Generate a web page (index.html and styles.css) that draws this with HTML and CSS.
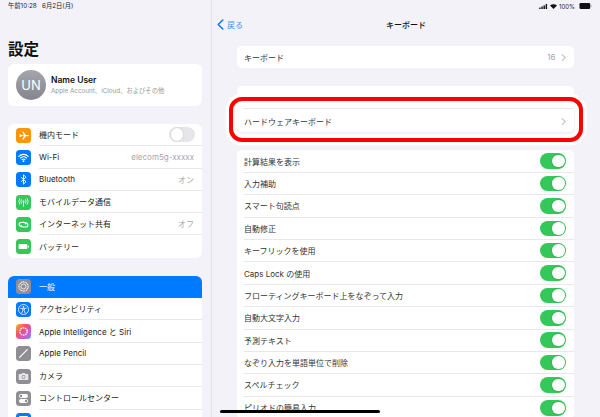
FILE: index.html
```html
<!DOCTYPE html>
<html lang="ja">
<head>
  <meta charset="UTF-8">
  <meta name="viewport" content="width=device-width, initial-scale=1.0">
  <title>設定 - キーボード</title>
  <link rel="stylesheet" href="styles.css">
</head>
<body>
  <div class="ipad">
    <aside class="sidebar">
      <div class="status-time">午前10:28&nbsp;&nbsp;&nbsp;6月2日(月)</div>
      <h1>設定</h1>
      <div class="profile">
        <div class="avatar">UN</div>
        <div>
          <div class="profile-name">Name User</div>
          <div class="profile-sub">Apple Account、iCloud、およびその他</div>
        </div>
      </div>

      <div class="side-group">
        <div class="side-row">
          <svg class="ico" viewBox="0 0 15 15"><rect width="15" height="15" rx="3.5" fill="#ff9500"/><path d="M3.2 6.6l.9-.3 2 1 1.7-.1-1.6-3.7h1l2.7 3.6 2-.1c.7 0 1 .3 1 .6s-.3.6-1 .6l-2 0-2.7 3.6h-1l1.6-3.7-1.7-.1-2 1-.9-.3.7-1.100z" fill="#fff"/></svg>
          <div class="side-text"><span>機内モード</span><i class="toggle off"></i></div>
        </div>
        <div class="side-row">
          <svg class="ico" viewBox="0 0 15 15"><rect width="15" height="15" rx="3.5" fill="#007aff"/><path d="M2.8 6.3a6.6 6.6 0 0 1 9.4 0M4.5 8a4.2 4.2 0 0 1 6 0M6.1 9.6a1.9 1.9 0 0 1 2.8 0" fill="none" stroke="#fff" stroke-width="1.1" stroke-linecap="round"/><circle cx="7.5" cy="11.2" r=".9" fill="#fff"/></svg>
          <div class="side-text"><span>Wi-Fi</span><span class="val">elecom5g-xxxxx</span></div>
        </div>
        <div class="side-row">
          <svg class="ico" viewBox="0 0 15 15"><rect width="15" height="15" rx="3.5" fill="#007aff"/><path d="M5 5.2l5 4.6-2.5 2.4V2.8L10 5.2 5 9.8" fill="none" stroke="#fff" stroke-width=".9"/></svg>
          <div class="side-text"><span>Bluetooth</span><span class="val">オン</span></div>
        </div>
        <div class="side-row">
          <svg class="ico" viewBox="0 0 15 15"><rect width="15" height="15" rx="3.5" fill="#34c759"/><path d="M7.5 7v4.600" stroke="#fff" stroke-width="1"/><circle cx="7.5" cy="6.4" r="1" fill="#fff"/><path d="M5.400 4.600a3 3 0 0 0 0 3.600M9.600 4.600a3 3 0 0 1 0 3.600M3.700 3.600a5 5 0 0 0 0 5.600M11.300 3.600a5 5 0 0 1 0 5.600" fill="none" stroke="#fff" stroke-width=".8" stroke-linecap="round"/></svg>
          <div class="side-text"><span>モバイルデータ通信</span></div>
        </div>
        <div class="side-row">
          <svg class="ico" viewBox="0 0 15 15"><rect width="15" height="15" rx="3.5" fill="#34c759"/><path d="M6.400 9.600H5.200a2.100 2.100 0 0 1 0-4.200h2.600a2.100 2.100 0 0 1 2 1.600M8.600 5.800h1.200a2.100 2.100 0 0 1 0 4.200H7.200a2.100 2.100 0 0 1-2-1.600" fill="none" stroke="#fff" stroke-width="1.1" stroke-linecap="round"/></svg>
          <div class="side-text"><span>インターネット共有</span><span class="val">オフ</span></div>
        </div>
        <div class="side-row last">
          <svg class="ico" viewBox="0 0 15 15"><rect width="15" height="15" rx="3.5" fill="#34c759"/><rect x="2.600" y="4.900" width="8.800" height="5.200" rx="1.200" fill="#fff"/><rect x="11.900" y="6.400" width="1" height="2.200" rx=".5" fill="#fff"/></svg>
          <div class="side-text"><span>バッテリー</span></div>
        </div>
      </div>

      <div class="side-group">
        <div class="side-row active">
          <svg class="ico" viewBox="0 0 15 15"><rect width="15" height="15" rx="3.5" fill="#8e8e93"/><circle cx="7.5" cy="7.5" r="4.600" fill="none" stroke="#fff" stroke-width="1.100" stroke-dasharray="1.200 .5"/><circle cx="7.5" cy="7.5" r="2.500" fill="none" stroke="#fff" stroke-width=".8"/></svg>
          <div class="side-text"><span>一般</span></div>
        </div>
        <div class="side-row">
          <svg class="ico" viewBox="0 0 15 15"><rect width="15" height="15" rx="3.5" fill="#007aff"/><circle cx="7.5" cy="7.5" r="5" fill="none" stroke="#fff" stroke-width=".8"/><circle cx="7.5" cy="4.800" r=".9" fill="#fff"/><path d="M4.800 6.200l2 .5v1.800l-1 2.600M10.200 6.200l-2 .5v1.800l1 2.600M6.800 6.700h1.400" fill="none" stroke="#fff" stroke-width=".8" stroke-linecap="round"/></svg>
          <div class="side-text"><span>アクセシビリティ</span></div>
        </div>
        <div class="side-row">
          <svg class="ico" viewBox="0 0 15 15"><defs><linearGradient id="ai" x1="0" y1="0" x2="1" y2="1"><stop offset="0" stop-color="#ffb02e"/><stop offset=".4" stop-color="#f2506e"/><stop offset=".75" stop-color="#c65be8"/><stop offset="1" stop-color="#4aa8ff"/></linearGradient></defs><rect width="15" height="15" rx="3.5" fill="url(#ai)"/><circle cx="7.5" cy="7.5" r="3.700" fill="none" stroke="#fff" stroke-width="1.300" stroke-dasharray="1.600 .7"/></svg>
          <div class="side-text"><span>Apple Intelligence と Siri</span></div>
        </div>
        <div class="side-row">
          <svg class="ico" viewBox="0 0 15 15"><rect width="15" height="15" rx="3.5" fill="#8e8e93"/><path d="M3.600 11.400l7.600-7.800" stroke="#fff" stroke-width="1.200" stroke-linecap="round"/></svg>
          <div class="side-text"><span>Apple Pencil</span></div>
        </div>
        <div class="side-row">
          <svg class="ico" viewBox="0 0 15 15"><rect width="15" height="15" rx="3.5" fill="#8e8e93"/><path d="M3.400 5h2l.8-1.100h2.600L9.600 5h2a.7.7 0 0 1 .7.7v4.600a.7.7 0 0 1-.7.7H3.400a.7.7 0 0 1-.7-.7V5.700a.7.7 0 0 1 .7-.7z" fill="#e6e6e8"/><circle cx="7.5" cy="8" r="1.900" fill="#8e8e93"/><circle cx="7.5" cy="8" r="1.200" fill="#e6e6e8"/></svg>
          <div class="side-text"><span>カメラ</span></div>
        </div>
        <div class="side-row">
          <svg class="ico" viewBox="0 0 15 15"><rect width="15" height="15" rx="3.5" fill="#8e8e93"/><rect x="3" y="3" width="9" height="4" rx="2" fill="#fff"/><circle cx="5" cy="5" r="1.200" fill="#8e8e93"/><rect x="3" y="8" width="9" height="4" rx="2" fill="#fff"/><circle cx="10" cy="10" r="1.200" fill="#8e8e93"/></svg>
          <div class="side-text"><span>コントロールセンター</span></div>
        </div>
        <div class="side-row last">
          <svg class="ico" viewBox="0 0 15 15"><rect width="15" height="15" rx="3.5" fill="#007aff"/><rect x="3" y="3" width="9" height="9" rx="1" fill="#fff"/></svg>
          <div class="side-text"></div>
        </div>
      </div>
    </aside>

    <main class="detail">
      <div class="status-icons">
        <svg class="signal" viewBox="0 0 12 7"><rect x="0" y="5" width="2" height="2" fill="#111"/><rect x="3" y="3.500" width="2" height="3.500" fill="#111"/><rect x="6" y="2" width="2" height="5" fill="#111"/><rect x="9" y="0" width="2" height="7" fill="#111"/></svg>
        <svg class="wifi" viewBox="0 0 10 7"><path d="M5 7L0 2.200a7.200 7.200 0 0 1 10 0z" fill="#111"/></svg>
        <span>100%</span>
        <svg class="battery" viewBox="0 0 14 7"><rect width="12.500" height="7" rx="1.600" fill="#111"/><rect x="13" y="2.300" width="1" height="2.400" rx=".5" fill="#999"/></svg>
      </div>
      <div class="nav">
        <div class="back">
          <svg viewBox="0 0 7 11"><path d="M5.800 1L1.200 5.500l4.600 4.500" fill="none" stroke="#007aff" stroke-width="1.500" stroke-linecap="round" stroke-linejoin="round"/></svg>
          <span>戻る</span>
        </div>
        <div class="nav-title">キーボード</div>
      </div>

      <div class="card">
        <div class="row last"><span>キーボード</span><span class="val">16<i class="chev"></i></span></div>
      </div>

      <div class="card card-hw">
        <div class="row blank"></div>
        <div class="row last"><span>ハードウェアキーボード</span><span class="val"><i class="chev"></i></span></div>
        <div class="ring"></div>
      </div>

      <div class="card card-list">
        <div class="row"><span>計算結果を表示</span><i class="toggle"></i></div>
        <div class="row"><span>入力補助</span><i class="toggle"></i></div>
        <div class="row"><span>スマート句読点</span><i class="toggle"></i></div>
        <div class="row"><span>自動修正</span><i class="toggle"></i></div>
        <div class="row"><span>キーフリックを使用</span><i class="toggle"></i></div>
        <div class="row"><span>Caps Lock の使用</span><i class="toggle"></i></div>
        <div class="row"><span>フローティングキーボード上をなぞって入力</span><i class="toggle"></i></div>
        <div class="row"><span>自動大文字入力</span><i class="toggle"></i></div>
        <div class="row"><span>予測テキスト</span><i class="toggle"></i></div>
        <div class="row"><span>なぞり入力を単語単位で削除</span><i class="toggle"></i></div>
        <div class="row"><span>スペルチェック</span><i class="toggle"></i></div>
        <div class="row last"><span>ピリオドの簡易入力</span><i class="toggle"></i></div>
      </div>
    </main>
    <div class="home-bar"></div>
  </div>
</body>
</html>
```

FILE: styles.css
```css
* { box-sizing: border-box; }
html, body { margin: 0; padding: 0; }
body { font-family: Inter, "Noto Sans CJK JP", sans-serif; font-size: 8px; color: #222; background: #f2f2f8; }
.ipad { position: relative; display: flex; width: 600px; height: 417px; overflow: hidden; }

/* left column */
.sidebar { width: 212px; flex: none; height: 417px; padding: 0 9px 0 8px; border-right: 1px solid #e2e2e7; overflow: hidden; }
.status-time { height: 12px; padding-top: 2px; font-size: 6.300px; line-height: 8px; color: #222; white-space: nowrap; }
h1 { margin: 27px 0 0; height: 25px; font-size: 15.500px; line-height: 22px; font-weight: 700; color: #111; }
.profile { display: flex; align-items: center; gap: 5px; height: 42px; padding-left: 8px; background: #fff; border-radius: 6px; }
.avatar { width: 30px; height: 30px; border-radius: 50%; background: linear-gradient(#a5a6ad, #84858d); color: #fff; font-size: 13px; line-height: 30px; text-align: center; }
.profile-name { font-size: 8.500px; line-height: 11px; font-weight: 600; color: #111; }
.profile-sub { margin-top: 1px; font-size: 6.300px; line-height: 8px; color: #999; white-space: nowrap; }

.side-group { margin-top: 18px; background: #fff; border-radius: 6px; overflow: hidden; }
.side-row { display: flex; align-items: center; gap: 8px; height: 22.300px; padding-left: 8px; }
.ico { width: 15px; height: 15px; flex: none; }
.side-text { flex: 1; align-self: stretch; display: flex; align-items: center; justify-content: space-between; padding-right: 8px; border-bottom: 1px solid #e8e8ec; white-space: nowrap; }
.side-row.last .side-text, .side-row.active .side-text { border-bottom: none; }
.side-row.active { background: #007aff; color: #fff; }
.val { display: flex; align-items: center; color: #a6a6ab; }

/* switches */
.toggle { display: block; position: relative; flex: none; width: 26px; height: 15.500px; border-radius: 8px; background: #34c759; }
.toggle::after { content: ""; position: absolute; top: 1.500px; right: 1.500px; width: 12.500px; height: 12.500px; border-radius: 50%; background: #fff; box-shadow: 0 0 2px rgba(0,0,0,0.2); }
.toggle.off { background: #e6e6e9; }
.toggle.off::after { right: auto; left: 1.500px; }
.side-text .toggle { margin-right: -1px; }

/* right column */
.detail { flex: 1; height: 417px; overflow: hidden; }
.status-icons { display: flex; justify-content: flex-end; align-items: center; gap: 2px; height: 12px; padding-right: 8px; font-size: 6px; color: #222; }
.signal { width: 9px; height: 5px; }
.wifi { width: 7px; height: 5px; }
.battery { width: 13px; height: 6px; margin-left: 2px; }
.nav { position: relative; display: flex; justify-content: center; align-items: center; height: 25px; }
.back { position: absolute; left: 5px; top: 0; height: 25px; display: flex; align-items: center; gap: 3px; color: #3d95fb; }
.back svg { width: 7px; height: 11px; }
.nav-title { font-size: 8px; font-weight: 500; color: #111; }

.card { margin: 9px 26px 0 25px; background: #fff; border-radius: 5px; }
.row { display: flex; align-items: center; justify-content: space-between; height: 22.400px; margin-left: 7px; padding-right: 8px; border-bottom: 1px solid #e8e8ec; white-space: nowrap; color: #333; }
.row.last { border-bottom: none; }
.chev { display: block; width: 4.500px; height: 4.500px; margin: 0 2px 0 4px; border-top: 1px solid #bcbcc1; border-right: 1px solid #bcbcc1; transform: rotate(45deg); }

.card-hw { position: relative; margin-top: 18px; }
.card-hw .row { height: 23px; }
.card-hw .row.last { padding-top: 1px; }
.ring { position: absolute; top: 11px; left: -8px; right: -9px; bottom: -10px; border: 4px solid #f00; border-radius: 13px; box-shadow: 0 0 0 3.500px #fff, inset 0 0 0 4px rgba(255,255,255,0.85); }
.card-list { margin-top: 18px; }

.home-bar { position: absolute; left: 220px; top: 410px; width: 160px; height: 3px; border-radius: 2px; background: #000; }
```
